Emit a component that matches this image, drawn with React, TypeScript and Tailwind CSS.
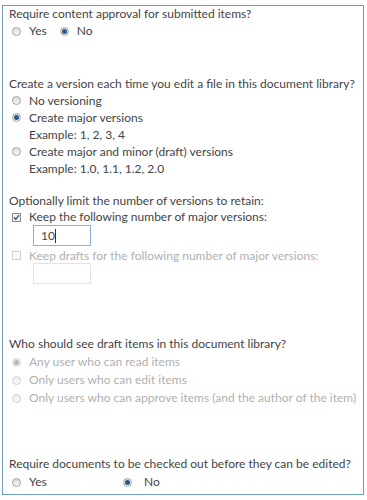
import React from "react";

const font = { fontFamily: 'Lato, "Open Sans", sans-serif' };

function Radio({ checked = false, disabled = false }: { checked?: boolean; disabled?: boolean }) {
  return (
    <span
      className={`relative inline-flex h-[9px] w-[9px] shrink-0 items-center justify-center rounded-full border bg-gradient-to-b ${
        disabled ? "border-[#d0d0d0] from-[#eeeeee] to-[#fafafa]" : "border-[#a3a3a3] from-[#dcdcdc] to-[#f7f7f7]"
      }`}
    >
      {checked && (
        <span
          className={`h-[5px] w-[5px] rounded-full ${disabled ? "bg-[#b5b5b5]" : "bg-[#245a8c]"}`}
        />
      )}
    </span>
  );
}

function Checkbox({ checked = false, disabled = false }: { checked?: boolean; disabled?: boolean }) {
  return (
    <span
      className={`inline-flex h-[9px] w-[9px] shrink-0 items-center justify-center border ${
        disabled ? "border-[#d3d3d3] bg-[#fafafa]" : "border-[#8e8e8e] bg-[#f1f1f1]"
      }`}
    >
      {checked && (
        <svg width="7" height="7" viewBox="0 0 7 7">
          <path d="M1 3.5 L2.8 5.3 L6 1.2" fill="none" stroke="#31497a" strokeWidth="1.3" />
        </svg>
      )}
    </span>
  );
}

function Option({
  label,
  checked,
  disabled,
  h = "h-[17px]",
}: {
  label: string;
  checked?: boolean;
  disabled?: boolean;
  h?: string;
}) {
  return (
    <div className={`flex ${h} items-center`}>
      <span className="ml-[3px] mr-[8px] flex">
        <Radio checked={checked} disabled={disabled} />
      </span>
      <span className={disabled ? "text-[#b0b0b0]" : ""}>{label}</span>
    </div>
  );
}

export default function App() {
  return (
    <div className="h-[500px] w-[367px] bg-white pt-[5px] pl-[2px]" style={font}>
      <div className="flex h-[490px] w-[362px] flex-col whitespace-nowrap border border-[#6f9dc2] pl-[6px] text-[12px] text-[#444444]">
        {/* Content approval */}
        <div className="flex h-[16px] items-center">Require content approval for submitted items?</div>
        <div className="flex h-[18px] items-center">
          <span className="ml-[3px] mr-[8px] flex">
            <Radio />
          </span>
          <span>Yes</span>
          <span className="ml-[13px] mr-[8px] flex">
            <Radio checked />
          </span>
          <span>No</span>
        </div>

        {/* Versioning */}
        <div className="mt-[35px] flex h-[17px] items-center">
          Create a version each time you edit a file in this document library?
        </div>
        <Option label="No versioning" />
        <Option label="Create major versions" checked />
        <div className="flex h-[17px] items-center pl-[20px]">Example: 1, 2, 3, 4</div>
        <Option label="Create major and minor (draft) versions" />
        <div className="flex h-[17px] items-center pl-[20px]">Example: 1.0, 1.1, 1.2, 2.0</div>

        {/* Version limits */}
        <div className="mt-[15px] flex h-[17px] items-center">Optionally limit the number of versions to retain:</div>
        <div className="flex h-[16px] items-center">
          <span className="ml-[3px] mr-[8px] flex">
            <Checkbox checked />
          </span>
          <span>Keep the following number of major versions:</span>
        </div>
        <div className="ml-[24px] flex h-[21px] w-[58px] items-center border border-[#8cb0d8] pl-[7px]">
          <span>10</span>
          <span className="h-[14px] w-px bg-[#333333]" />
        </div>
        <div className="mt-[2px] flex h-[15px] items-center">
          <span className="ml-[3px] mr-[8px] flex">
            <Checkbox disabled />
          </span>
          <span className="text-[#b0b0b0]">Keep drafts for the following number of major versions:</span>
        </div>
        <div className="ml-[24px] h-[21px] w-[58px] border border-[#e3e3e3]" />

        {/* Draft visibility */}
        <div className="mt-[51px] flex h-[18px] items-center">Who should see draft items in this document library?</div>
        <Option label="Any user who can read items" checked disabled h="h-[18px]" />
        <Option label="Only users who can edit items" disabled h="h-[18px]" />
        <Option label="Only users who can approve items (and the author of the item)" disabled h="h-[18px]" />

        {/* Check out */}
        <div className="mt-[48px] flex h-[18px] items-center">
          Require documents to be checked out before they can be edited?
        </div>
        <div className="flex h-[18px] items-center">
          <span className="ml-[3px] mr-[8px] flex">
            <Radio />
          </span>
          <span className="w-[94px]">Yes</span>
          <span className="mr-[12px] flex">
            <Radio checked />
          </span>
          <span>No</span>
        </div>
      </div>
    </div>
  );
}
